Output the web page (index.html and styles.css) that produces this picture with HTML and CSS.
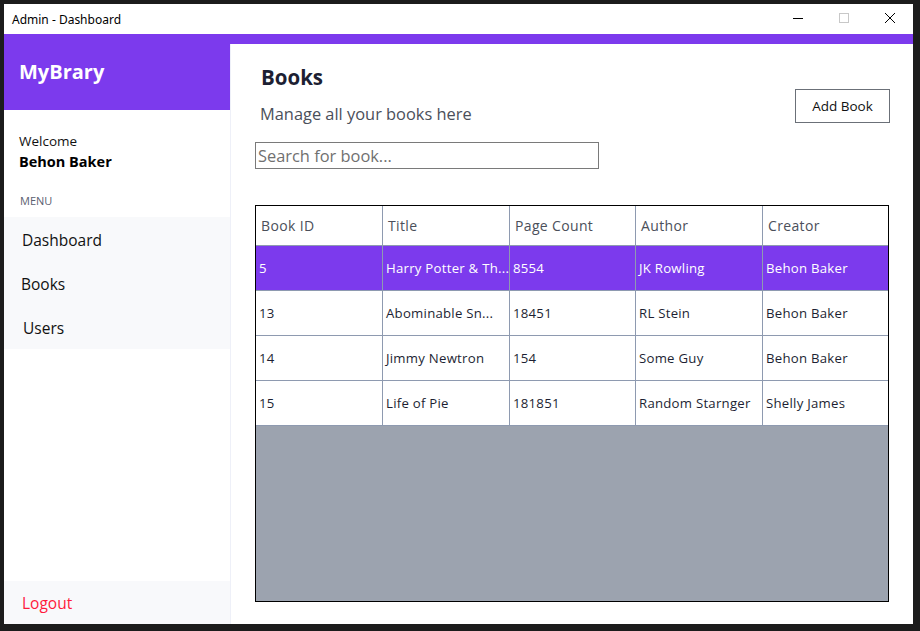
FILE: index.html
```html
<!DOCTYPE html>
<html>
<head>
<meta charset="utf-8">
<title>Admin - Dashboard</title>
<link rel="stylesheet" href="styles.css">
</head>
<body>
<div class="window">
  <div class="titlebar">
    <span class="wintitle">Admin - Dashboard</span>
    <div class="controls">
      <svg class="ctl" width="46" height="30" viewBox="0 0 46 30"><path d="M18 14.5h10" stroke="#000" stroke-width="1"/></svg>
      <svg class="ctl" width="46" height="30" viewBox="0 0 46 30"><rect x="18.5" y="9.5" width="9" height="9" fill="none" stroke="#c8c8c8" stroke-width="1"/></svg>
      <svg class="ctl" width="46" height="30" viewBox="0 0 46 30"><path d="M18 9l10 10M28 9l-10 10" stroke="#000" stroke-width="1"/></svg>
    </div>
  </div>
  <div class="app">
    <aside class="sidebar">
      <div class="brand">MyBrary</div>
      <div class="welcome">
        <div class="welcome-label">Welcome</div>
        <div class="welcome-name">Behon Baker</div>
      </div>
      <div class="menu-label">MENU</div>
      <nav class="menu">
        <div class="menu-item">Dashboard</div>
        <div class="menu-item books">Books</div>
        <div class="menu-item users">Users</div>
      </nav>
      <div class="spacer"></div>
      <div class="logout">Logout</div>
    </aside>
    <main class="main">
      <div class="topstrip"></div>
      <div class="content">
        <div class="head">
          <div class="head-text">
            <h1 class="title">Books</h1>
            <p class="subtitle">Manage all your books here</p>
          </div>
          <button class="add-btn">Add Book</button>
        </div>
        <input class="search" type="text" placeholder="Search for book...">
        <div class="grid">
          <div class="row header">
            <div class="cell">Book ID</div>
            <div class="cell">Title</div>
            <div class="cell">Page Count</div>
            <div class="cell">Author</div>
            <div class="cell">Creator</div>
          </div>
          <div class="row selected">
            <div class="cell">5</div>
            <div class="cell">Harry Potter &amp; Th...</div>
            <div class="cell">8554</div>
            <div class="cell">JK Rowling</div>
            <div class="cell">Behon Baker</div>
          </div>
          <div class="row">
            <div class="cell">13</div>
            <div class="cell">Abominable Sn...</div>
            <div class="cell">18451</div>
            <div class="cell">RL Stein</div>
            <div class="cell">Behon Baker</div>
          </div>
          <div class="row">
            <div class="cell">14</div>
            <div class="cell">Jimmy Newtron</div>
            <div class="cell">154</div>
            <div class="cell">Some Guy</div>
            <div class="cell">Behon Baker</div>
          </div>
          <div class="row">
            <div class="cell">15</div>
            <div class="cell">Life of Pie</div>
            <div class="cell">181851</div>
            <div class="cell">Random Starnger</div>
            <div class="cell">Shelly James</div>
          </div>
        </div>
      </div>
    </main>
  </div>
</div>
</body>
</html>
```

FILE: styles.css
```css
* { box-sizing: border-box; }
html, body {
  margin: 0;
  padding: 0;
  width: 920px;
  height: 631px;
  overflow: hidden;
  background: #1c1c1c;
  font-family: "Open Sans", "DejaVu Sans", sans-serif;
}
.window {
  margin: 4px 0 0 4px;
  width: 909px;
  height: 620px;
  background: #fff;
  display: flex;
  flex-direction: column;
}
.titlebar {
  height: 30px;
  display: flex;
  align-items: center;
  justify-content: space-between;
  background: #fff;
}
.wintitle {
  font-family: "Noto Sans", "Open Sans", sans-serif;
  font-size: 12px;
  color: #000;
  padding-left: 8px;
  padding-top: 1px;
}
.controls { display: flex; }
.ctl { display: block; }
.app {
  flex: 1;
  display: flex;
  min-height: 0;
}
.sidebar {
  width: 227px;
  border-right: 1px solid #eef0f8;
  display: flex;
  flex-direction: column;
}
.brand {
  height: 76px;
  background: #7c3aed;
  color: #fff;
  font-weight: 700;
  font-size: 20px;
  padding-left: 15px;
  display: flex;
  align-items: center;
  padding-bottom: 2px;
}
.welcome {
  padding: 21px 0 0 15px;
}
.welcome-label {
  font-size: 13.5px;
  color: #111;
  line-height: 20px;
}
.welcome-name {
  font-size: 14.5px;
  font-weight: 700;
  color: #000;
  line-height: 22px;
}
.menu-label {
  font-size: 11px;
  color: #5a6070;
  padding: 21px 0 0 16px;
  line-height: 14px;
}
.menu {
  margin-top: 9px;
  background: #f8f9fb;
  padding: 0;
}
.menu-item {
  height: 44px;
  display: flex;
  align-items: center;
  padding-left: 18px;
  padding-top: 2px;
  font-size: 15.5px;
  color: #111;
}
.menu-item.books { padding-left: 17px; }
.menu-item.users { padding-left: 19px; }
.spacer { flex: 1; }
.logout {
  height: 43px;
  background: #f8f9fb;
  color: #ff1a3c;
  font-size: 15.5px;
  display: flex;
  align-items: center;
  padding-left: 18px;
}
.main {
  flex: 1;
  display: flex;
  flex-direction: column;
  min-width: 0;
}
.topstrip {
  height: 10px;
  background: #7c3aed;
  margin-left: -1px;
}
.content {
  flex: 1;
  padding: 0 24px 22px 24px;
  display: flex;
  flex-direction: column;
}
.head {
  display: flex;
  justify-content: space-between;
  align-items: flex-start;
}
.head-text { padding-left: 6px; }
.title {
  margin: 0;
  padding-top: 19px;
  font-size: 20.5px;
  font-weight: 700;
  color: #1d1f33;
  line-height: 28px;
}
.subtitle {
  margin: 12px 0 0 -1px;
  font-size: 16.4px;
  color: #4b4f5a;
  line-height: 22px;
}
.add-btn {
  margin-top: 45px;
  margin-right: -1px;
  width: 95px;
  height: 34px;
  background: #fff;
  border: 1px solid #6b7078;
  font-family: inherit;
  font-size: 13.5px;
  color: #111;
  padding: 0;
}
.search {
  margin-top: 17px;
  width: 344px;
  height: 27px;
  border: 1px solid #7a7a7a;
  font-family: inherit;
  font-size: 16.4px;
  color: #333;
  padding: 0 2px;
  outline: none;
}
.search::placeholder { color: #707070; }
.grid {
  margin-top: 36px;
  flex: 1;
  border: 1px solid #000;
  background: #9ca3af;
}
.row {
  display: grid;
  grid-template-columns: 127px 127px 126px 127px 125px;
  height: 45px;
  background: #fff;
}
.row.header { height: 40px; }
.cell {
  border-right: 1px solid #8e9ab0;
  border-bottom: 1px solid #8e9ab0;
  display: flex;
  align-items: center;
  padding-left: 3px;
  font-size: 13.2px;
  letter-spacing: 0.25px;
  color: #1d1f33;
  white-space: nowrap;
  overflow: hidden;
}
.cell:last-child { border-right: none; }
.header .cell {
  padding-left: 5px;
  font-size: 14px;
  letter-spacing: 0.35px;
  color: #4b4f5a;
}
.selected { background: #7c3aed; }
.selected .cell { color: #fff; }
```
